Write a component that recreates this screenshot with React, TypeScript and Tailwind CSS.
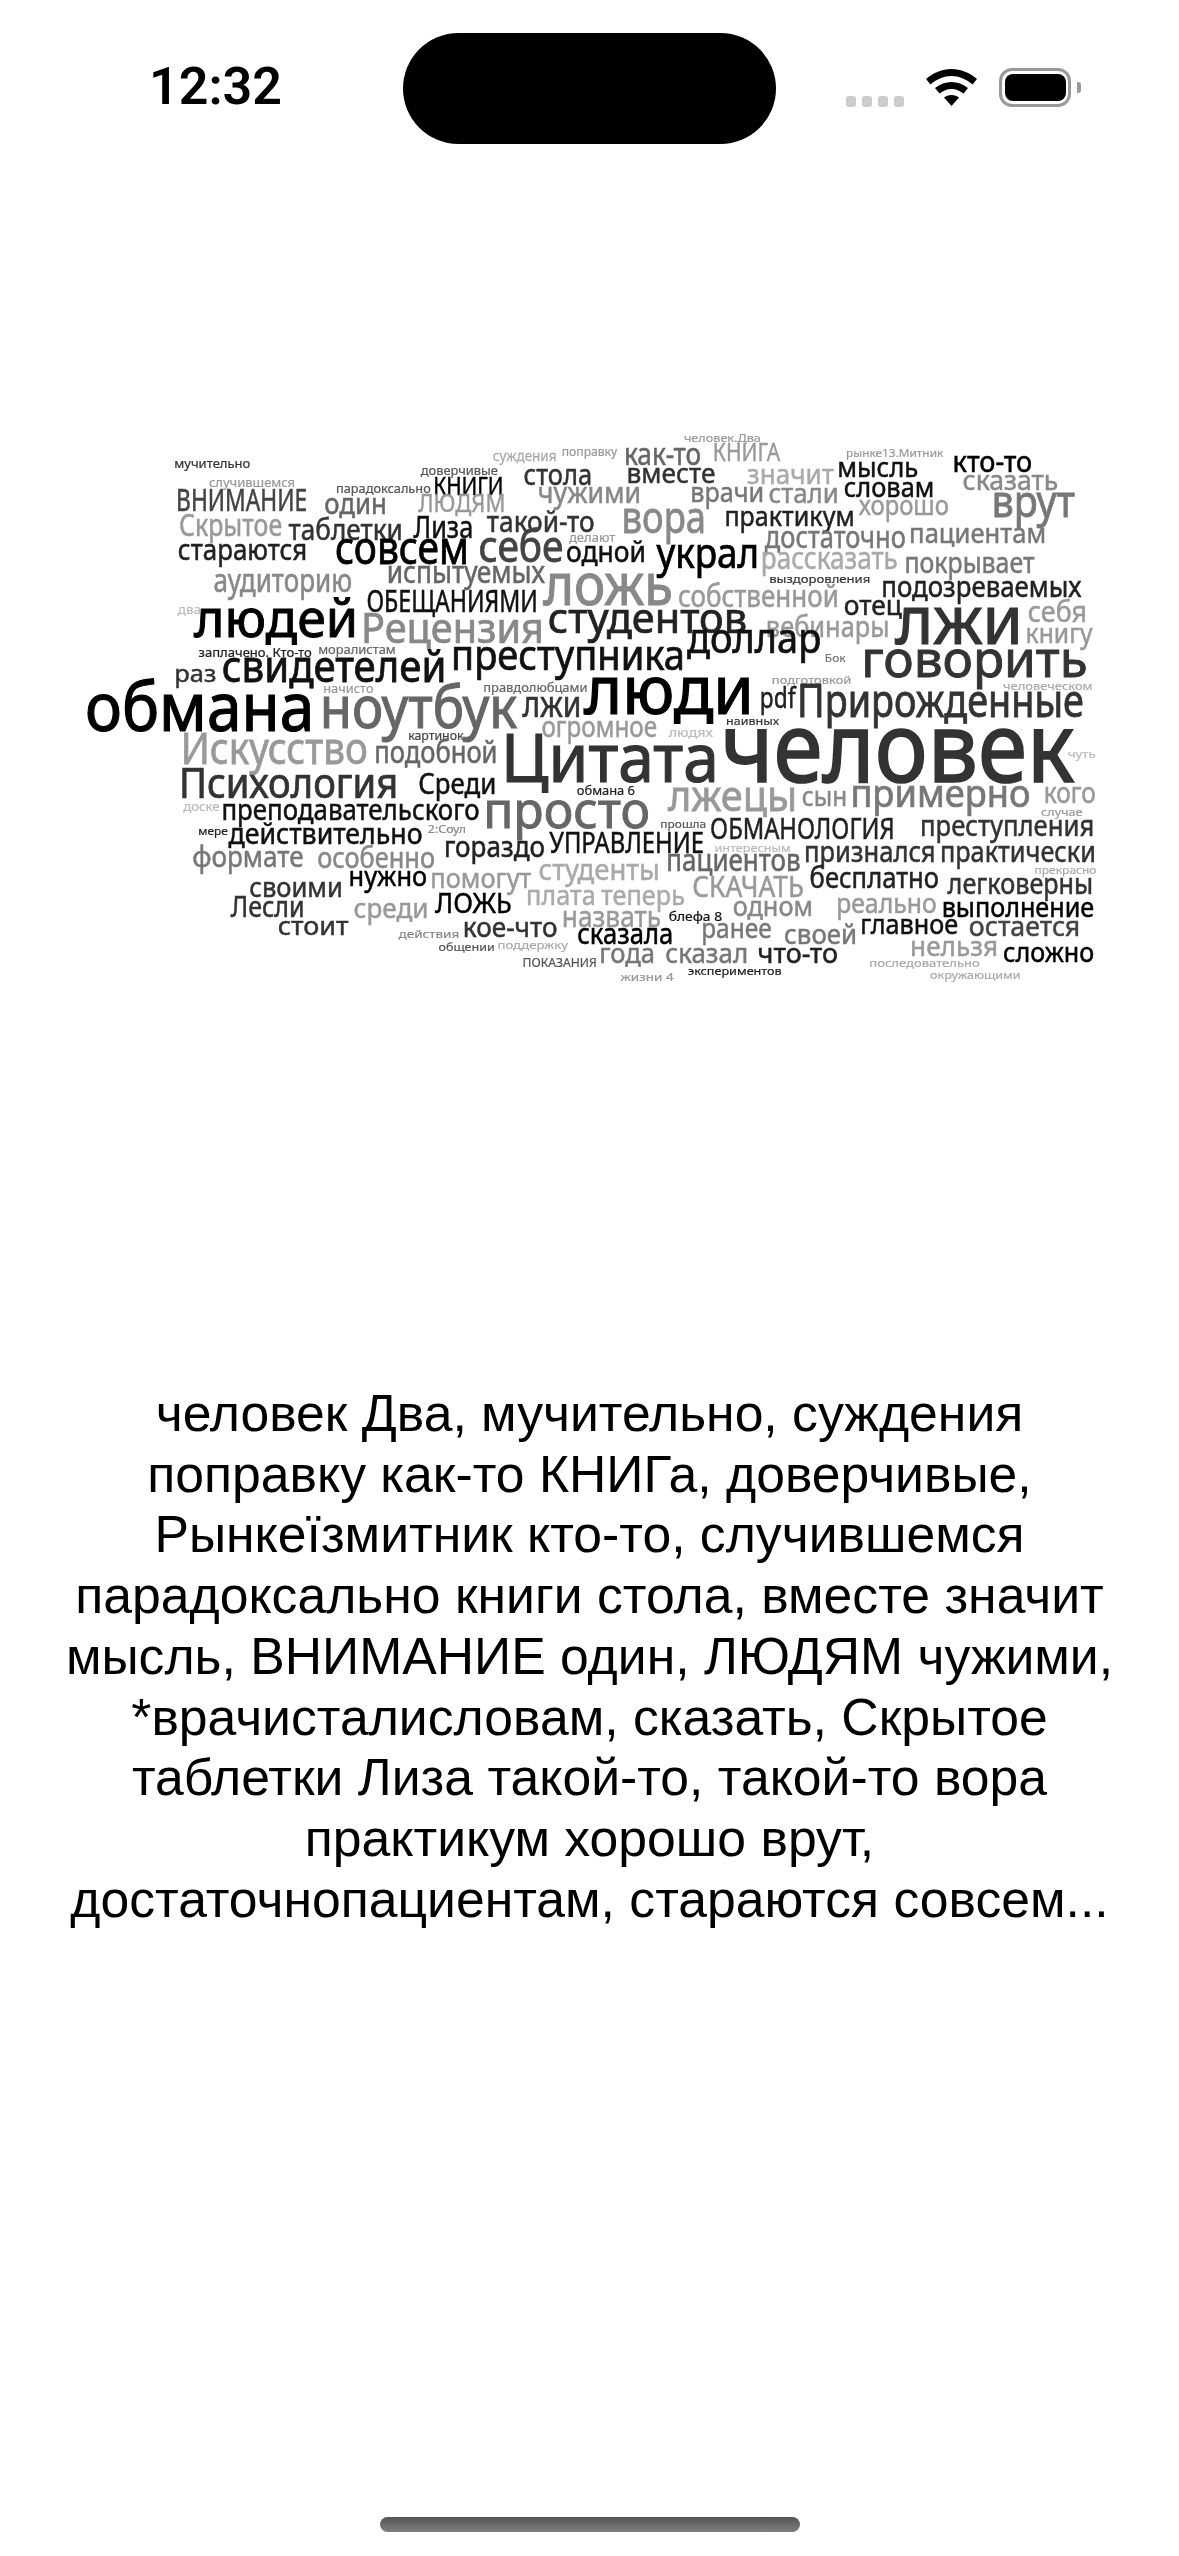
type Word = [string, number, number, number, number, string];

interface Region {
  ox: number;
  oy: number;
  sx: number;
  words: Word[];
}

// word cloud data: text, left, right, baseline, font size, colour, in the units of each region
const regions: Region[] = [
  {
    ox: 60,
    oy: 420,
    sx: 2.8,
    words: [
      ['мучительно', 320, 533, 143, 36, '#333'],
      ['случившемся', 417, 658, 200, 36, '#999'],
      ['суждения', 1212, 1390, 122, 38, '#aaa'],
      ['поправку', 1405, 1560, 108, 34, '#999'],
      ['доверчивые', 1010, 1226, 165, 34, '#555'],
      ['парадоксально', 773, 1038, 220, 34, '#555'],
      ['КНИГИ', 1045, 1242, 225, 70, '#000'],
      ['стола', 1298, 1490, 196, 78, '#333'],
      ['ВНИМАНИЕ', 325, 692, 272, 84, '#444'],
      ['один', 740, 915, 282, 78, '#666'],
      ['ЛЮДЯМ', 1003, 1247, 277, 68, '#999'],
      ['чужими', 1338, 1627, 250, 78, '#888'],
      ['Скрытое', 333, 622, 347, 84, '#999'],
      ['таблетки', 640, 960, 360, 78, '#333'],
      ['Лиза', 990, 1157, 353, 82, '#111'],
      ['такой-то', 1195, 1497, 335, 78, '#333'],
      ['делают', 1425, 1555, 367, 32, '#999'],
      ['стараются', 330, 692, 420, 80, '#222'],
      ['совсем', 770, 1145, 432, 125, '#000'],
      ['себе', 1172, 1410, 425, 118, '#444'],
      ['одной', 1417, 1641, 425, 78, '#111'],
      ['испытуемых', 915, 1358, 490, 84, '#666'],
      ['аудиторию', 430, 818, 515, 90, '#888'],
      ['ложь', 1353, 1716, 555, 177, '#888'],
      ['ОБЕЩАНИЯМИ', 858, 1338, 575, 84, '#111'],
      ['два', 330, 395, 583, 34, '#bbb'],
      ['людей', 375, 835, 650, 158, '#000'],
      ['Рецензия', 843, 1355, 668, 112, '#888'],
      ['студентов', 1366, 1924, 640, 112, '#222'],
      ['заплачено. Кто-то', 388, 705, 710, 34, '#222'],
      ['моралистам', 723, 940, 703, 32, '#666'],
      ['раз', 320, 438, 785, 66, '#333'],
      ['свидетелей', 453, 1082, 785, 118, '#111'],
      ['преступника', 1095, 1750, 750, 112, '#111'],
      ['начисто', 737, 878, 820, 32, '#999'],
      ['правдолюбцами', 1185, 1477, 815, 32, '#666'],
    ],
  },
  {
    ox: 600,
    oy: 420,
    sx: 3.015,
    words: [
      ['человек.Два', 253, 485, 65, 30, '#999'],
      ['как-то', 72, 305, 135, 84, '#666'],
      ['КНИГА', 340, 543, 123, 68, '#999'],
      ['рынке13.Митник', 742, 1035, 112, 30, '#999'],
      ['кто-то', 1063, 1303, 155, 78, '#000'],
      ['мысль', 715, 960, 170, 76, '#111'],
      ['вместе', 80, 348, 190, 76, '#333'],
      ['значит', 443, 705, 192, 76, '#aaa'],
      ['сказать', 1093, 1382, 210, 76, '#888'],
      ['врачи', 272, 495, 245, 76, '#777'],
      ['стали', 508, 720, 250, 76, '#888'],
      ['словам', 735, 1008, 232, 76, '#111'],
      ['врут', 1180, 1432, 290, 118, '#777'],
      ['хорошо', 780, 1052, 285, 76, '#999'],
      ['вора', 65, 320, 340, 118, '#888'],
      ['практикум', 375, 768, 318, 76, '#222'],
      ['пациентам', 932, 1345, 368, 76, '#777'],
      ['достаточно', 497, 922, 385, 84, '#777'],
      ['украл', 170, 480, 445, 112, '#000'],
      ['рассказать', 485, 898, 448, 84, '#aaa'],
      ['покрывает', 918, 1310, 458, 80, '#777'],
      ['выздоровления', 510, 815, 488, 30, '#333'],
      ['подозреваемых', 848, 1452, 530, 78, '#222'],
      ['собственной', 235, 720, 562, 82, '#999'],
      ['отец', 735, 910, 585, 76, '#222'],
      ['вебинары', 500, 873, 650, 78, '#999'],
      ['лжи', 890, 1275, 672, 205, '#333'],
      ['себя', 1290, 1468, 605, 78, '#999'],
      ['книгу', 1283, 1485, 668, 76, '#999'],
      ['доллар', 262, 667, 700, 112, '#111'],
      ['Бок', 678, 740, 727, 30, '#777'],
      ['говорить', 788, 1470, 770, 152, '#333'],
      ['подготовкой', 518, 758, 792, 30, '#999'],
      ['человеческом', 1215, 1485, 810, 30, '#aaa'],
    ],
  },
  {
    ox: 60,
    oy: 700,
    sx: 2.8,
    words: [
      ['обмана', 70, 712, 92, 205, '#000'],
      ['ноутбук', 727, 1280, 85, 173, '#666'],
      ['люди', 1467, 1943, 42, 205, '#000'],
      ['лжи', 1295, 1460, 50, 100, '#333'],
      ['картинок', 975, 1130, 120, 32, '#444'],
      ['огромное', 1348, 1672, 110, 78, '#999'],
      ['Искусство', 338, 862, 192, 118, '#999'],
      ['подобной', 880, 1225, 190, 84, '#666'],
      ['Цитата', 1235, 1845, 245, 200, '#333'],
      ['Психология', 333, 947, 295, 112, '#333'],
      ['Среди', 1003, 1222, 282, 78, '#111'],
      ['обмана 6', 1447, 1610, 285, 32, '#222'],
      ['доске', 345, 447, 332, 32, '#bbb'],
      ['преподавательского', 452, 1175, 360, 78, '#111'],
      ['просто', 1185, 1652, 385, 150, '#666'],
      ['УПРАВЛЕНИЕ', 1370, 1803, 460, 78, '#111'],
      ['мере', 387, 470, 405, 30, '#222'],
      ['действительно', 472, 1015, 432, 78, '#111'],
      ['2:Соул', 1030, 1137, 398, 30, '#888'],
      ['формате', 370, 682, 500, 80, '#777'],
      ['особенно', 720, 1050, 505, 80, '#888'],
      ['гораздо', 1075, 1358, 470, 78, '#222'],
      ['студенты', 1340, 1680, 540, 78, '#aaa'],
      ['нужно', 808, 1028, 558, 72, '#000'],
      ['помогут', 1037, 1320, 565, 76, '#999'],
      ['своими', 530, 792, 590, 76, '#333'],
      ['Лесли', 478, 685, 650, 78, '#333'],
      ['среди', 822, 1032, 655, 76, '#999'],
      ['ЛОЖЬ', 1050, 1265, 640, 74, '#000'],
      ['плата', 1305, 1500, 615, 76, '#aaa'],
      ['теперь', 1515, 1750, 615, 76, '#aaa'],
      ['назвать', 1405, 1683, 680, 78, '#999'],
      ['стоит', 610, 808, 705, 70, '#333'],
      ['действия', 948, 1118, 715, 30, '#888'],
      ['кое-что', 1128, 1393, 712, 76, '#333'],
      ['сказала', 1448, 1717, 733, 78, '#000'],
      ['общении', 1060, 1217, 753, 30, '#555'],
      ['поддержку', 1225, 1422, 748, 30, '#aaa'],
      ['ПОКАЗАНИЯ', 1295, 1503, 800, 36, '#555'],
      ['года', 1510, 1666, 788, 76, '#777'],
    ],
  },
  {
    ox: 600,
    oy: 700,
    sx: 3.015,
    words: [
      ['человек', 365, 1430, 245, 290, '#333'],
      ['чуть', 1410, 1495, 175, 30, '#bbb'],
      ['наивных', 380, 540, 75, 30, '#333'],
      ['людях', 207, 340, 110, 34, '#bbb'],
      ['pdf', 482, 590, 25, 78, '#222'],
      ['Прирожденные', 594, 1459, 50, 125, '#333'],
      ['лжецы', 205, 595, 332, 115, '#999'],
      ['сын', 608, 745, 318, 76, '#888'],
      ['примерно', 755, 1298, 320, 105, '#777'],
      ['кого', 1338, 1495, 310, 78, '#999'],
      ['случае', 1330, 1455, 347, 30, '#999'],
      ['прошла', 182, 320, 383, 30, '#555'],
      ['ОБМАНОЛОГИЯ', 332, 888, 418, 78, '#222'],
      ['преступления', 965, 1490, 408, 78, '#333'],
      ['интересным', 345, 575, 455, 30, '#bbb'],
      ['пациентов', 200, 605, 513, 82, '#666'],
      ['признался', 615, 1012, 485, 80, '#333'],
      ['практически', 1025, 1495, 487, 80, '#333'],
      ['прекрасно', 1310, 1497, 522, 30, '#aaa'],
      ['СКАЧАТЬ', 278, 615, 590, 78, '#999'],
      ['бесплатно', 632, 1022, 565, 80, '#222'],
      ['легковерны', 1048, 1487, 583, 78, '#333'],
      ['одном', 400, 642, 648, 76, '#888'],
      ['реально', 712, 1015, 640, 76, '#999'],
      ['выполнение', 1030, 1490, 650, 76, '#000'],
      ['блефа 8', 207, 368, 662, 32, '#111'],
      ['ранее', 305, 518, 715, 76, '#777'],
      ['своей', 555, 775, 733, 76, '#777'],
      ['главное', 785, 1080, 703, 76, '#111'],
      ['остается', 1112, 1448, 707, 76, '#444'],
      ['сказал', 197, 447, 788, 76, '#777'],
      ['что-то', 475, 718, 788, 76, '#222'],
      ['нельзя', 935, 1200, 768, 72, '#999'],
      ['сложно', 1215, 1490, 785, 72, '#000'],
      ['последовательно', 812, 1145, 802, 30, '#aaa'],
      ['окружающими', 995, 1268, 837, 30, '#aaa'],
      ['экспериментов', 265, 548, 825, 30, '#222'],
      ['жизни 4', 62, 222, 842, 30, '#999'],
    ],
  },
];

const lines = [
  'человек Два, мучительно, суждения',
  'поправку как-то КНИГа, доверчивые,',
  'Рынкеїзмитник кто-то, случившемся',
  'парадоксально книги стола, вместе значит',
  'мысль, ВНИМАНИЕ один, ЛЮДЯМ чужими,',
  '*врачисталисловам, сказать, Скрытое',
  'таблетки Лиза такой-то, такой-то вора',
  'практикум хорошо врут,',
  'достаточнопациентам, стараются совсем...',
];

function WordCloud() {
  return (
    <svg
      viewBox="0 420 1179 580"
      className="mt-[276px] block h-[580px] w-[1179px] blur-[0.5px] font-['Noto_Sans',sans-serif]"
    >
      {regions.map((r) =>
        r.words.map(([text, x1, x2, base, size, color]) => {
          const fontSize = (size < 130 ? size * 1.1 : size) / 3;
          return (
            <text
              key={`${r.ox}-${r.oy}-${text}-${x1}`}
              x={r.ox + x1 / r.sx}
              y={r.oy + base / 3}
              fontSize={fontSize}
              fill={color}
              stroke={color}
              strokeWidth={fontSize * 0.018}
              textLength={(x2 - x1) / r.sx}
              lengthAdjust="spacingAndGlyphs"
            >
              {text}
            </text>
          );
        }),
      )}
    </svg>
  );
}

function StatusBar() {
  return (
    <div className="flex h-[144px] items-start pl-[149px] pt-[33px]">
      <span className="mt-[29px] w-[254px] font-['Roboto',sans-serif] text-[52px] leading-[50px] font-semibold text-black">
        12:32
      </span>
      <div className="h-[111px] w-[373px] rounded-[56px] bg-black" />
      <div className="ml-[70px] mt-[63px] flex gap-[6px]">
        <span className="h-[11px] w-[10px] rounded-[3px] bg-[#ccc]" />
        <span className="h-[11px] w-[10px] rounded-[3px] bg-[#ccc]" />
        <span className="h-[11px] w-[10px] rounded-[3px] bg-[#ccc]" />
        <span className="h-[11px] w-[10px] rounded-[3px] bg-[#ccc]" />
      </div>
      <svg viewBox="0 0 51 37" className="ml-[22px] mt-[36px] h-[37px] w-[51px]">
        <path d="M25.5 0C16 0 7.5 3.8 0 10l4.5 5.5C11 10 18 7 25.5 7S40 10 46.5 15.5L51 10C43.5 3.8 35 0 25.5 0Z" />
        <path d="M25.5 13c-6 0-11.5 2.2-16.5 6l4.5 5.5c3.6-2.7 7.6-4.5 12-4.5s8.4 1.8 12 4.5L42 19c-5-3.8-10.5-6-16.5-6Z" />
        <path d="M25.5 26c-3.2 0-5.5 1-7.5 2.5L25.5 37 33 28.5C31 27 28.7 26 25.5 26Z" />
      </svg>
      <div className="ml-[22px] mt-[35px] flex items-center">
        <div className="flex h-[39px] w-[72px] items-center justify-center rounded-[13px] border-[3px] border-[#999]">
          <div className="h-[27px] w-[61px] rounded-[8px] bg-black" />
        </div>
        <div className="ml-[6px] h-[11px] w-[4px] rounded-r-[3px] bg-[#999]" />
      </div>
    </div>
  );
}

export default function App() {
  return (
    <div className="flex h-[2556px] w-[1179px] flex-col bg-white font-['Liberation_Sans',sans-serif]">
      <StatusBar />
      <WordCloud />
      <div className="mt-[383px] text-center text-[51.7px] leading-[60.7px] text-black">
        {lines.map((line) => (
          <div key={line} className="whitespace-nowrap">
            {line}
          </div>
        ))}
      </div>
      <div className="mt-auto mb-[24px] flex justify-center">
        <div className="h-[15px] w-[420px] rounded-full bg-gradient-to-b from-[#555] to-[#808080]" />
      </div>
    </div>
  );
}
